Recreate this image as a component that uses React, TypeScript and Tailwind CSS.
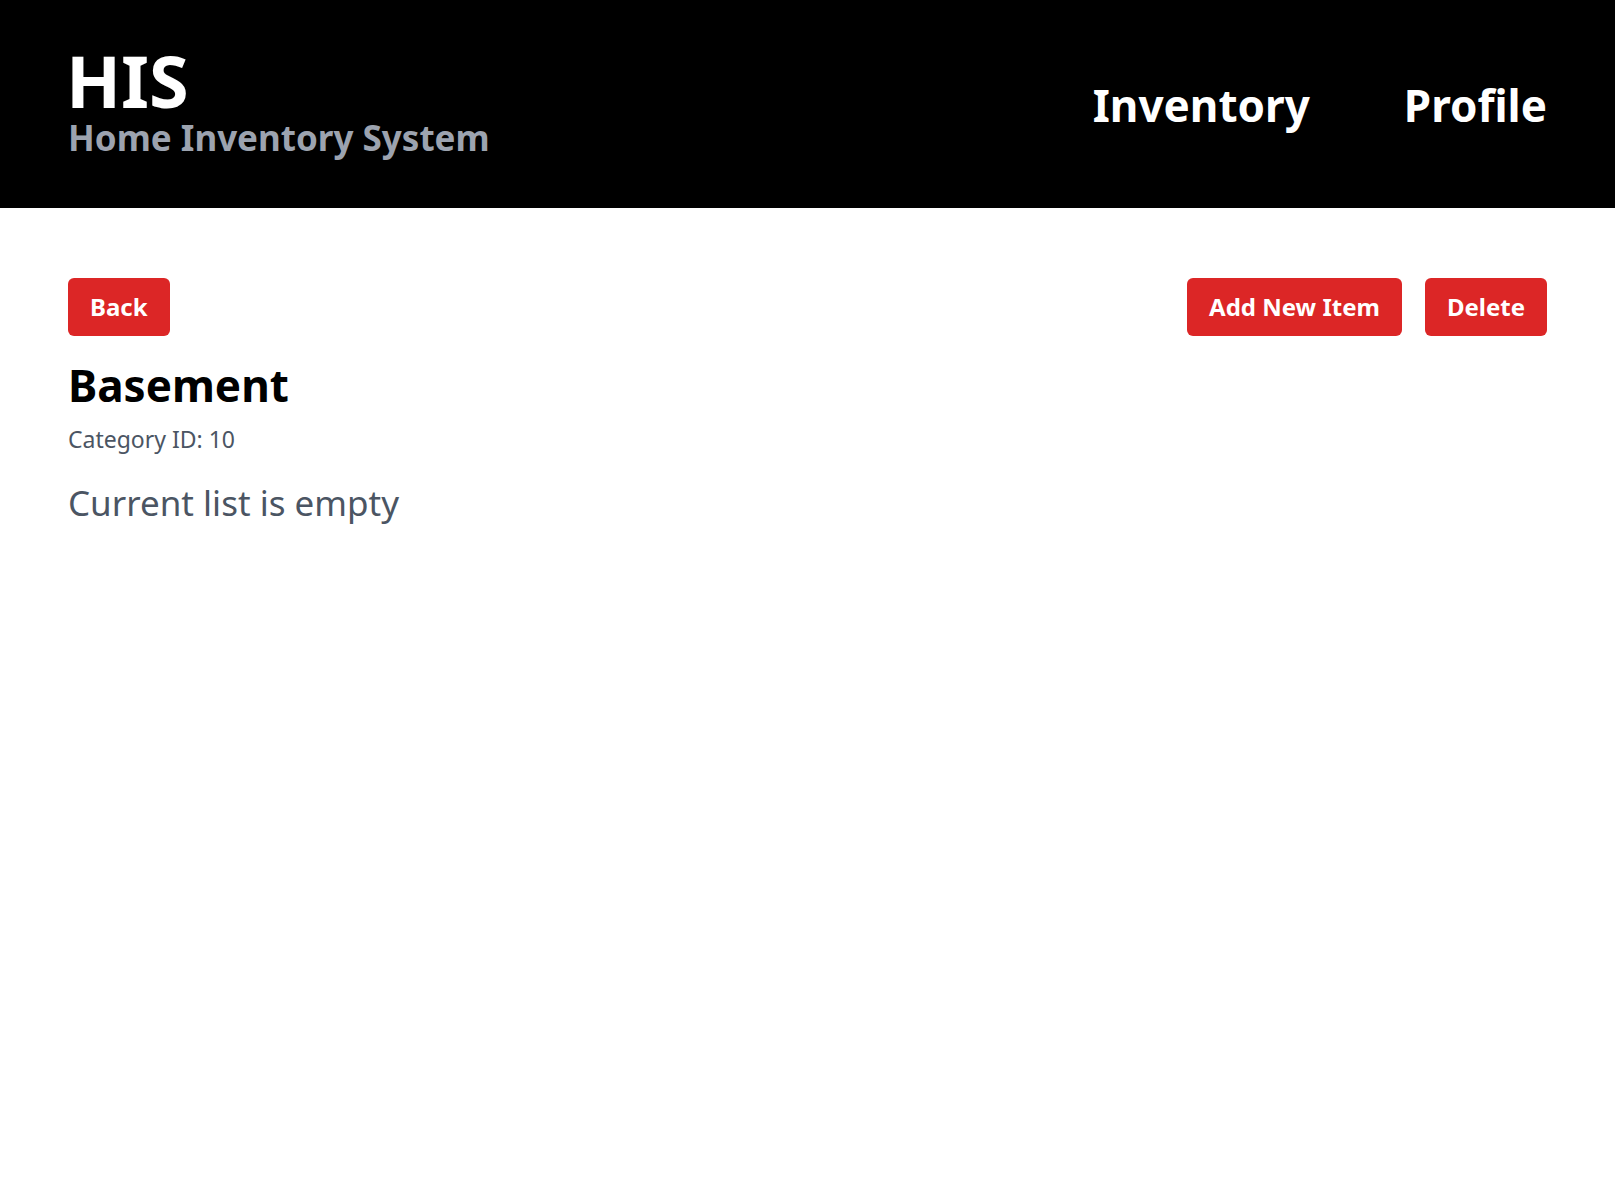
import React from "react";

const font = { fontFamily: '"Noto Sans", "Open Sans", sans-serif' };

function Header() {
  return (
    <header className="bg-black text-white h-[208px] px-[68px] flex items-center justify-between">
      <div className="flex flex-col pb-[4px]">
        <span className="text-[72px] font-bold leading-[72px] -ml-[2px]">HIS</span>
        <span className="text-[35px] font-bold leading-[44px] text-[#9ca3af]">
          Home Inventory System
        </span>
      </div>
      <nav className="flex items-center gap-[94px] pt-[2px]">
        <a href="#" className="text-[44px] font-bold">
          Inventory
        </a>
        <a href="#" className="text-[44px] font-bold">
          Profile
        </a>
      </nav>
    </header>
  );
}

const btn = "bg-[#dc2626] text-white text-2xl font-bold rounded-md h-[58px] px-[22px]";

export default function App() {
  return (
    <div className="min-h-screen bg-white" style={font}>
      <Header />
      <main className="px-[68px] pt-[70px]">
        <div className="flex justify-between items-center">
          <button className={btn}>Back</button>
          <div className="flex gap-[23px]">
            <button className={btn}>Add New Item</button>
            <button className={btn}>Delete</button>
          </div>
        </div>
        <h1 className="text-[44px] font-bold text-black leading-[50px] mt-[24px]">Basement</h1>
        <p className="text-[23px] text-[#4b5563] leading-[33px] mt-[13px]">Category ID: 10</p>
        <p className="text-[35px] text-[#4b5563] leading-[48px] mt-[23px]">Current list is empty</p>
      </main>
    </div>
  );
}
